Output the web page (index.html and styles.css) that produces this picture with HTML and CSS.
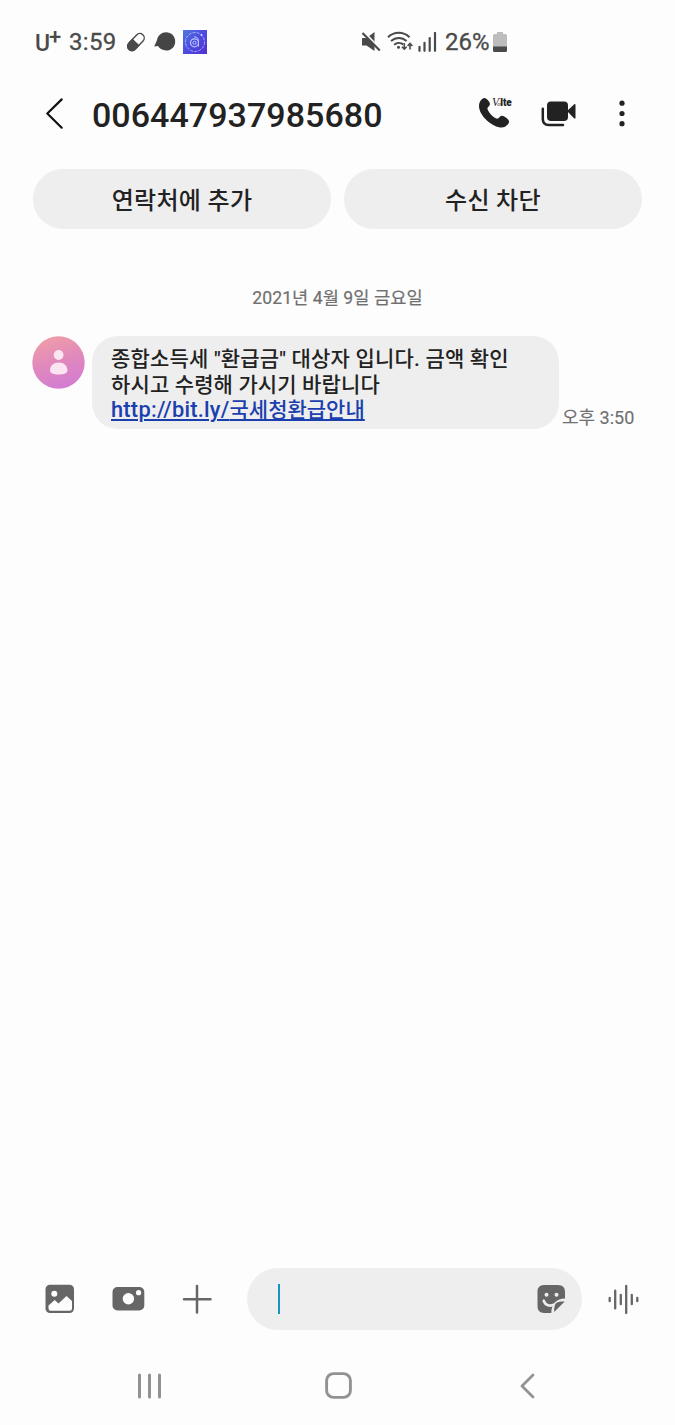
FILE: index.html
```html
<!DOCTYPE html>
<html lang="ko">
<head>
<meta charset="utf-8">
<title>006447937985680</title>
<link rel="stylesheet" href="styles.css">
</head>
<body>
<div class="phone">
  <div class="status">
    <span class="carrier">U<sup>+</sup></span>
    <span class="clock">3:59</span>
    <svg class="pill" width="22" height="22" viewBox="0 0 22 22"><g transform="rotate(-47 11 11)"><rect x="1" y="6.6" width="20" height="8.8" rx="4.4" fill="none" stroke="#4a4a4a" stroke-width="1.4"/><path d="M11 6H5a5 5 0 0 0 0 10h6z" fill="#4a4a4a"/></g></svg>
    <svg class="blob" width="22" height="20" viewBox="0 0 22 20"><path d="M12 .3c5.200 0 9.200 3.900 9.200 9.100s-3.900 9.100-9.100 9.100c-3.400 0-6.400-1.500-8-4.400L.3 14.600C1.200 12 2.400 9.900 3 8 4 3.500 7.500.3 12 .3z" fill="#454545"/></svg>
    <svg class="app" width="24" height="24" viewBox="0 0 24 24"><defs><linearGradient id="blue" x1="0" y1="0" x2="1" y2="1"><stop stop-color="#5277df"/><stop offset=".5" stop-color="#4b4be0"/><stop offset="1" stop-color="#5430d2"/></linearGradient></defs><path fill="url(#blue)" d="M0 0h24v24H0z"/><g fill="none" stroke="#bcc5fb"><circle cx="12" cy="12" r="9.500" stroke-width=".8" stroke-dasharray="3 1.200"/><circle cx="11.500" cy="12.800" r="4" stroke-width="1.200"/><circle cx="11.500" cy="12.800" r="1.600"/><path d="M11 6.800c3 0 4.500 1.500 4.500 4v5.700"/></g><circle cx="18.500" cy="5" r=".9" fill="#dfe4ff"/></svg>
    <svg class="mute" width="20" height="22" viewBox="0 0 20 22"><path d="M1 7h4.500L13.500 1v19l-8-5.500H1z" fill="#4a4a4a"/><path d="M2 .8 19.500 18.800" stroke="#fdfdfd" stroke-width="3"/><path d="M1.500 2 18.800 19.500" stroke="#4a4a4a" stroke-width="2.200"/></svg>
    <svg class="wifi" width="27" height="22" viewBox="0 0 27 22"><g fill="none" stroke="#4a4a4a" stroke-width="2"><path d="M1 6.200C7.300.4 16.200.4 22.500 6.200M4 10.100c4.700-4.200 11-4.200 15.600 0M7.200 13.700c2.600-2.300 6.500-2.400 9.200-.3"/><path stroke-width="1.600" d="M17.300 12.200V18M14.900 15.700l2.400 2.500 2.400-2.500M23 18.500V12.700M20.600 15l2.400-2.500 2.400 2.500"/></g><circle cx="11.500" cy="16.300" r="1.500" fill="#4a4a4a"/></svg>
    <svg class="signal" width="19" height="20" viewBox="0 0 19 20"><path d="M1.500 14.800v4M6.500 10.800v8M11.700 6v12.800M17 1v17.800" stroke="#4a4a4a" stroke-width="2.200" stroke-linecap="round"/></svg>
    <span class="percent">26%</span>
    <svg class="battery" width="14" height="20" viewBox="0 0 14 20"><path d="M4 0h6v2h2.500Q14 2 14 3.500V15H0V3.500Q0 2 1.500 2H4z" fill="#bdbdbd"/><path d="M0 14.600h14v3.900Q14 20 12.500 20h-11Q0 20 0 18.500z" fill="#4a4a4a"/></svg>
  </div>

  <header class="header">
    <svg class="back" width="19" height="32" viewBox="0 0 19 32"><path d="M16.700 1.400 2.300 15.500l14.400 14.200" fill="none" stroke="#111" stroke-width="2.200" stroke-linecap="round" stroke-linejoin="round"/></svg>
    <h1 class="number">006447937985680</h1>
    <svg class="call" width="36" height="34" viewBox="0 0 36 34"><path d="M1 9C1 4 4.500 1 6.500 1c2.200 0 5.500 4.100 5.500 6.100 0 2-2.600 3-2.600 4.500 0 2.900 6.800 10.100 9.800 10.100 1.800 0 2.500-3 4.700-3 2 0 7.200 3.500 7.200 5.900 0 2.300-3.500 6-7.300 6C14.500 30.600 1 18.800 1 9z" fill="#222"/><g fill="#222"><text class="volte-v" x="14" y="9">V</text><text class="volte-o" x="19.300" y="9">o</text><text class="volte-l" x="22.300" y="8.500">lte</text></g></svg>
    <svg class="video" width="36" height="27" viewBox="0 0 36 27"><rect x="6" y=".5" width="21" height="19.500" rx="4" fill="#222"/><path d="m26 10 7-6.500c.8-.7 1.500-.5 1.500.5v12.700c0 1-.7 1.200-1.500.5z" fill="#222"/><path d="M1.800 7.800V18q0 6 6 6H22" fill="none" stroke="#222" stroke-width="2.500" stroke-linecap="round"/></svg>
    <svg class="more" width="6" height="28" viewBox="0 0 6 28" fill="#222"><circle cx="3" cy="3.200" r="2.600"/><circle cx="3" cy="13.500" r="2.600"/><circle cx="3" cy="23.700" r="2.600"/></svg>
  </header>

  <div class="actions">
    <button class="action">연락처에 추가</button>
    <button class="action">수신 차단</button>
  </div>

  <main class="thread">
    <div class="date">2021년 4월 9일 금요일</div>
    <div class="message">
      <svg class="avatar" width="53" height="53" viewBox="0 0 53 53"><defs><linearGradient id="pink" x1=".35" y1="0" x2=".65" y2="1"><stop stop-color="#ef9ca8"/><stop offset=".5" stop-color="#e088bd"/><stop offset="1" stop-color="#d27bd3"/></linearGradient></defs><circle cx="26.500" cy="26.500" r="26.200" fill="url(#pink)"/><g fill="#fbe5f1"><circle cx="26.600" cy="19" r="4.900"/><path d="M18 34.500c0-5 3.500-8 8.700-8s8.700 3 8.700 8c0 2.600-3.500 4-8.700 4s-8.700-1.400-8.700-4z"/></g></svg>
      <div class="bubble">
        <div class="line first">종합소득세 "환급금" 대상자 입니다. 금액 확인</div>
        <div class="line second">하시고 수령해 가시기 바랍니다</div>
        <div class="line third"><span class="link"><span class="host">http://bit.ly/</span>국세청환급안내</span></div>
      </div>
      <time class="time">오후 3:50</time>
    </div>
  </main>

  <footer class="composer">
    <svg class="gallery" width="30" height="30" viewBox="0 0 30 30"><rect x=".5" y=".8" width="28.500" height="28.200" rx="4.500" fill="#666"/><circle cx="9.300" cy="9.800" r="3" fill="#fdfdfd"/><path d="M3.500 21.500 9.700 16l3.800 3.500 8-7.500 5.500 5v7.500q0 2.200-2.200 2.200H5.700q-2.200 0-2.200-2.200z" fill="#fdfdfd"/></svg>
    <svg class="camera" width="33" height="26" viewBox="0 0 33 26"><rect x=".5" y="1" width="31.800" height="23.500" rx="5" fill="#666"/><circle cx="16.400" cy="12.800" r="5.700" fill="#fdfdfd"/><circle cx="26.600" cy="6.700" r="2.600" fill="#fdfdfd"/></svg>
    <svg class="plus" width="30" height="30" viewBox="0 0 30 30"><path d="M15 2v26.500M2 15.200h26.500" stroke="#666" stroke-width="2.500" stroke-linecap="round"/></svg>
    <div class="input">
      <span class="caret"></span>
      <svg class="sticker" width="30" height="30" viewBox="0 0 30 30"><path d="M8 1h14q7 0 7 7v6.500C20.500 14.800 15.500 19.500 15.300 29H8Q1.500 29 1.500 22.500v-15Q1.500 1 8 1z" fill="#666"/><circle cx="10.500" cy="10.800" r="2" fill="#eee"/><circle cx="20.500" cy="10.800" r="2" fill="#eee"/><path d="M7.700 16.700c1.800 4.900 6.300 5.900 10.200 4" fill="none" stroke="#eee" stroke-width="2.600" stroke-linecap="round"/><path d="M18.200 28v-3.500q0-7 7-7h3.500z" fill="#666"/></svg>
    </div>
    <svg class="wave" width="31" height="31" viewBox="0 0 31 31"><path d="M1.700 13.800v3.400M7.200 6.700v17.700M12.800 10.800v9.400M18.200 2v27M23.800 10.800v9.400M29.300 13.800v3.400" stroke="#666" stroke-width="2.300" stroke-linecap="round"/></svg>
  </footer>

  <nav class="nav">
    <svg class="recents" width="25" height="26" viewBox="0 0 25 26"><path d="M2.500 2v22M12.500 2v22M22.500 2v22" stroke="#929292" stroke-width="3" stroke-linecap="round"/></svg>
    <svg class="home" width="27" height="27" viewBox="0 0 27 27"><rect x="1.600" y="1.600" width="23.800" height="23.800" rx="7" fill="none" stroke="#929292" stroke-width="2.900"/></svg>
    <svg class="return" width="15" height="26" viewBox="0 0 15 26"><path d="M13 2 2 13l11 11" fill="none" stroke="#929292" stroke-width="2.800" stroke-linecap="round" stroke-linejoin="round"/></svg>
  </nav>
</div>
</body>
</html>
```
FILE: styles.css
```css
* { box-sizing: border-box; }
body { margin: 0; background: #fdfdfd; color: #222; font-family: Roboto, "Noto Sans CJK KR", sans-serif; }
svg { display: block; flex: none; }
.phone { height: 1425px; display: flex; flex-direction: column; overflow: hidden; }

.status { height: 84px; padding-left: 35px; display: flex; align-items: center; color: #4a4a4a; font-size: 24px; line-height: 28px; white-space: nowrap; }
.carrier { width: 34px; font-size: 23px; font-weight: 500; flex: none; line-height: 24px; padding-top: 4px; }
.carrier sup { font-size: 22px; line-height: 0; vertical-align: 7px; margin-left: -1px; }
.clock { width: 56px; flex: none; letter-spacing: .3px; -webkit-text-stroke: .3px #4a4a4a; }
.blob { margin-left: 7px; }
.app { margin-left: 7px; }
.mute { margin-left: 154px; }
.wifi { margin-left: 6px; }
.signal { margin-left: 4px; }
.percent { margin-left: 8px; width: 48px; flex: none; -webkit-text-stroke: .3px #4a4a4a; }

.header { height: 64px; padding-left: 45px; display: flex; align-items: center; margin-top: -2px; }
.number { margin: 0 0 0 28px; width: 386px; font-size: 34px; line-height: 40px; font-weight: 500; letter-spacing: .05px; padding-top: 1px; }
.video { margin-left: 27px; }
.more { margin-left: 42px; }
.volte-v { font: italic 11.5px "Liberation Serif", serif; }
.volte-o { font: italic 6.5px "Liberation Serif", serif; }
.volte-l { font: 900 10px Roboto, sans-serif; letter-spacing: -.1px; }

.actions { margin-top: 23px; padding: 0 33px; display: grid; grid-template-columns: 1fr 1fr; gap: 13px; }
.action { height: 60px; border: 0; border-radius: 30px; padding: 4px 0 0; background: #eee; color: #222; font: 500 24px/30px Roboto, "Noto Sans CJK KR", sans-serif; letter-spacing: .3px; white-space: nowrap; }

.thread { flex: 1; }
.date { margin-top: 57px; text-align: center; font-size: 17.6px; line-height: 24px; color: #707070; letter-spacing: .05px; -webkit-text-stroke: .2px #707070; }
.message { display: flex; margin: 26px 0 0 32px; }
.bubble { margin-left: 7px; width: 467px; height: 93px; padding: 10px 19px 8px; border-radius: 26px; background: #eee; font-size: 21px; line-height: 26px; font-weight: 500; white-space: nowrap; }
.line { height: 26px; }
.first { letter-spacing: .18px; }
.second { letter-spacing: .13px; }
.third { line-height: 24px; }
.link { color: #1c3fae; text-decoration: underline; text-decoration-thickness: 1.5px; text-underline-offset: 2px; }
.host { font-size: 21.8px; letter-spacing: .25px; }
.time { align-self: flex-end; margin-left: 3px; font-size: 18px; line-height: 22px; color: #707070; white-space: nowrap; -webkit-text-stroke: .15px #707070; }

.composer { height: 62px; padding-left: 45px; display: flex; align-items: center; }
.camera { margin-left: 37px; }
.plus { margin-left: 37px; }
.input { margin-left: 35px; width: 335px; height: 62px; border-radius: 31px; background: #eee; display: flex; align-items: center; justify-content: space-between; padding: 0 16px 0 31px; }
.caret { width: 2px; height: 30px; background: #1694c4; }
.wave { margin-left: 26px; }

.nav { height: 95px; padding-left: 136.5px; display: flex; align-items: center; }
.recents, .home, .return { margin-top: 16px; }
.home { margin-left: 163px; }
.return { margin-left: 168px; }
```
